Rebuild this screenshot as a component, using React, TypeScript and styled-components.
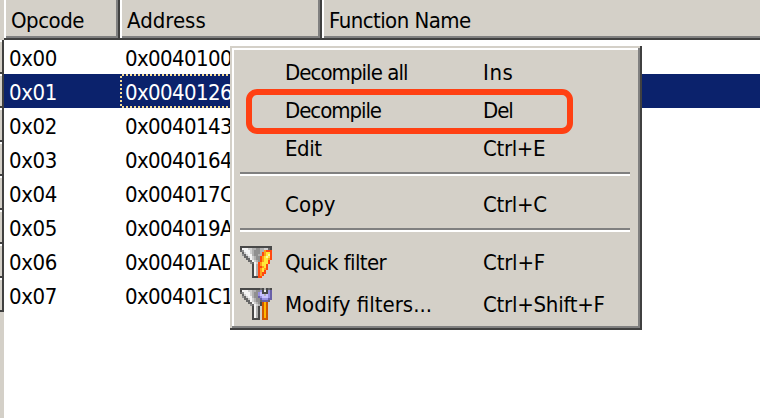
import React from "react";
import styled, { createGlobalStyle } from "styled-components";

const Global = createGlobalStyle`
  body { margin: 0; background: #fff; }
`;

const Window = styled.div`
  position: relative;
  width: 760px;
  height: 418px;
  overflow: hidden;
  background: #fff;
  color: #000;
  font: 22px/34px "DejaVu Sans Condensed", "DejaVu Sans", sans-serif;
  white-space: pre;
`;

const HeaderBar = styled.div`
  display: flex;
  height: 40px;
  background: #d4d0c8;
`;

const HeaderCorner = styled.div`
  width: 4px;
`;

const HeaderCell = styled.div<{ $width?: number }>`
  box-sizing: border-box;
  ${(p) => (p.$width ? `width: ${p.$width}px;` : "flex: 1;")}
  padding-left: 7px;
  line-height: 42px;
  box-shadow: ${(p) => (p.$width ? "inset -2px -2px #404040, inset 2px 0 #fff, inset -4px -4px #808080" : "inset 0 -2px #404040, inset 2px 0 #fff, inset 0 -4px #808080")};
`;

const Body = styled.div`
  display: flex;
  height: 378px;
`;

const Gutter = styled.div`
  width: 4px;
  background: #d4d0c8;
`;

const GutterCell = styled.div`
  box-sizing: border-box;
  height: 34px;
  border-right: 2px solid #404040;
  border-bottom: 2px solid #404040;
  box-shadow: inset 0 2px #fff;
`;

const Rows = styled.div`
  flex: 1;
`;

const Row = styled.div<{ $selected: boolean }>`
  display: grid;
  grid-template-columns: 116px 200px 1fr;
  height: 34px;
  line-height: 38px;
  background: ${(p) => (p.$selected ? "#0b226c" : "#fff")};
  color: ${(p) => (p.$selected ? "#fff" : "#000")};
`;

const Cell = styled.div<{ $focused?: boolean }>`
  height: 34px;
  box-sizing: border-box;
  padding-left: 5px;
  ${(p) =>
    p.$focused &&
    `background:
      repeating-linear-gradient(90deg, #f5db95 0 2px, transparent 2px 4px) 2px 0 / 100% 2px no-repeat,
      repeating-linear-gradient(90deg, #f5db95 0 2px, transparent 2px 4px) 2px 100% / 100% 2px no-repeat,
      repeating-linear-gradient(180deg, #f5db95 0 2px, transparent 2px 4px) 0 2px / 2px 100% no-repeat;`}
`;

const Label = styled.span<{ $spacing: number }>`
  letter-spacing: ${(p) => p.$spacing}px;
`;

const Menu = styled.div`
  position: absolute;
  left: 230px;
  top: 46px;
  box-sizing: border-box;
  width: 412px;
  height: 284px;
  padding: 7px 12px 5px 10px;
  background: #d4d0c8;
  box-shadow: inset -2px -2px #404040, inset 2px 2px #d4d0c8,
    inset -4px -4px #808080, inset 4px 4px #fff;
`;

const MenuItem = styled.div<{ $tall?: boolean }>`
  display: grid;
  grid-template-columns: 45px 198px 1fr;
  align-items: center;
  height: ${(p) => (p.$tall ? 42 : 38)}px;
`;

const MenuText = styled(Label)`
  padding-top: 2px;
`;

const Separator = styled.div`
  height: 2px;
  margin: 5px 0 9px;
  background: #808080;
  border-bottom: 2px solid #fff;
`;

const Highlight = styled.div`
  position: absolute;
  left: 16px;
  top: 43px;
  box-sizing: border-box;
  width: 327px;
  height: 45px;
  border: 6px solid #ff4013;
  border-radius: 11px;
`;

const Icon = styled.svg`
  width: 32px;
  height: 32px;
  display: block;
`;

const rows = [
  ["0x00", "0x00401000"],
  ["0x01", "0x00401260"],
  ["0x02", "0x00401430"],
  ["0x03", "0x00401640"],
  ["0x04", "0x004017C0"],
  ["0x05", "0x004019A0"],
  ["0x06", "0x00401AD0"],
  ["0x07", "0x00401C10"],
];

const palette: Record<string, string> = {
  k: "#484848", d: "#686868", g: "#909090", m: "#b0b0b0", l: "#d0d0d0", w: "#f4f4f4",
  r: "#ff4810", o: "#ffa018", y: "#ffe838", p: "#fff8a0",
  b: "#6860a8", v: "#9890e0", u: "#c8c0ff", n: "#d05800", a: "#ffb800",
};

const quickIcon = [
  "kkkkkkkkkkkkkkkk",
  "kwwwllmmggmmlldk",
  "dgwwwlmgggmmorrr",
  ".dlwwlmgggmroyyr",
  ".gdlwwmggmmroypr",
  "..ddlwlmggroypyr",
  "...ddwlmggroyyor",
  "....ddwlmgroyyr.",
  ".....gdwlroyyyr.",
  "......kwmroyyr..",
  "......kwmrroyr..",
  "......kwmroyor..",
  "......kwmroyr...",
  "......kwmrorr...",
  "......kwmror....",
  "......kkkrr.....",
];

const modifyIcon = [
  "kkkkkkkkkkdkmkdk",
  "kwwwllmmggvkwkvb",
  "dgwwwlmggvukkkvb",
  ".dlwwlmggvuumuvb",
  ".gdlwwmggbvuuuvb",
  "..ddlwlmggbvvvbb",
  "...ddwlmggdbbbd.",
  "....ddwlmgknan..",
  ".....gdwlmknan..",
  "......kwmk.nan..",
  "......kwmk.nan..",
  "......kwmk.nan..",
  "......kwmk.nan..",
  "......kwmk.nan..",
  "......kwmk.nan..",
  "......kkkk.nnn..",
];

function PixelIcon({ art }: { art: string[] }) {
  return (
    <Icon viewBox="0 0 16 16" shapeRendering="crispEdges">
      {art.flatMap((line, y) =>
        [...line].map((c, x) =>
          c === "." ? null : <rect key={`${x}-${y}`} x={x} y={y} width="1" height="1" fill={palette[c]} />
        )
      )}
    </Icon>
  );
}

type ItemProps = { name: string; keys: string; gap: number; keyGap: number; art?: string[] };

function Item({ name, keys, gap, keyGap, art }: ItemProps) {
  return (
    <MenuItem $tall={!!art}>
      <div>{art && <PixelIcon art={art} />}</div>
      <MenuText $spacing={gap}>{name}</MenuText>
      <MenuText $spacing={keyGap}>{keys}</MenuText>
    </MenuItem>
  );
}

export default function App() {
  return (
    <Window>
      <Global />
      <HeaderBar>
        <HeaderCorner />
        <HeaderCell $width={116}><Label $spacing={-0.5}>Opcode</Label></HeaderCell>
        <HeaderCell $width={202}><Label $spacing={0}>Address</Label></HeaderCell>
        <HeaderCell><Label $spacing={-0.55}>Function Name</Label></HeaderCell>
      </HeaderBar>
      <Body>
        <Gutter>{rows.map(([op]) => <GutterCell key={op} />)}</Gutter>
        <Rows>
          {rows.map(([op, address], i) => (
            <Row key={op} $selected={i === 1}>
              <Cell><Label $spacing={-0.4}>{op}</Label></Cell>
              <Cell $focused={i === 1}><Label $spacing={-0.6}>{address}</Label></Cell>
            </Row>
          ))}
        </Rows>
      </Body>
      <Menu>
        <Item name="Decompile all" keys="Ins" gap={-0.95} keyGap={0.6} />
        <Item name="Decompile" keys="Del" gap={-1.05} keyGap={-1.1} />
        <Item name="Edit" keys="Ctrl+E" gap={-0.4} keyGap={-0.35} />
        <Separator />
        <Item name="Copy" keys="Ctrl+C" gap={0.1} keyGap={-0.3} />
        <Separator />
        <Item name="Quick filter" keys="Ctrl+F" gap={-0.6} keyGap={-0.2} art={quickIcon} />
        <Item name="Modify filters..." keys="Ctrl+Shift+F" gap={0} keyGap={-0.25} art={modifyIcon} />
        <Highlight />
      </Menu>
    </Window>
  );
}
